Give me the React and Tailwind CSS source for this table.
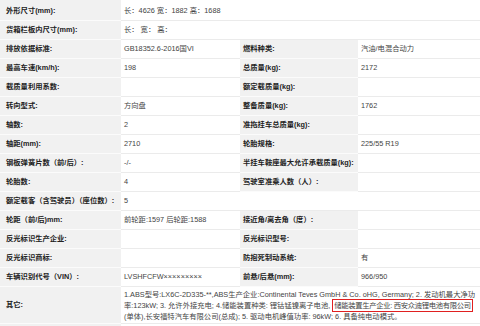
const rows = [
  ['外形尺寸(mm):', '长：4626 宽：1882 高：1688', null, null],
  ['货箱栏板内尺寸(mm):', '长： 宽： 高：', null, null],
  ['排放依据标准:', 'GB18352.6-2016国VI', '燃料种类:', '汽油/电混合动力'],
  ['最高车速(km/h):', '198', '总质量(kg):', '2172'],
  ['载质量利用系数:', '', '额定载质量(kg):', ''],
  ['转向型式:', '方向盘', '整备质量(kg):', '1762'],
  ['轴数:', '2', '准拖挂车总质量(kg):', ''],
  ['轴距(mm):', '2710', '轮胎规格:', '225/55 R19'],
  ['钢板弹簧片数（前/后）:', '-/-', '半挂车鞍座最大允许承载质量(kg):', ''],
  ['轮胎数:', '4', '驾驶室准乘人数（人）:', ''],
  ['额定载客（含驾驶员）（座位数）:', '5', null, null],
  ['轮距（前/后)mm:', '前轮距:1597 后轮距:1588', '接近角/离去角（度）:', ''],
  ['反光标识生产企业:', '', '反光标识型号:', ''],
  ['反光标识商标:', '', '防抱死制动系统:', '有'],
  ['车辆识别代号（VIN）:', 'LVSHFCFW×××××××××', '前悬/后悬(mm):', '966/950'],
]

// latin glyphs from Liberation Sans, CJK from Noto
const font = { fontFamily: '"Liberation Sans", "Noto Sans CJK SC", sans-serif' }

function Label({ text, first, left }) {
  return (
    <div
      className={`flex items-center bg-[#f1f1f1] border-b border-[#fbfbfb] font-bold text-[#222] whitespace-nowrap overflow-hidden ${left ? 'pl-[6px]' : 'pl-[3px]'} ${first ? 'pt-[2px]' : ''}`}
    >
      {text}
    </div>
  )
}

function Value({ text, first, span }) {
  return (
    <div
      className={`flex items-center bg-white border-b border-[#ebebeb] pl-[3px] text-[#444] whitespace-nowrap overflow-hidden ${span ? 'col-span-2' : ''} ${first ? 'pt-[2px]' : ''}`}
    >
      {text}
    </div>
  )
}

function SpecRow({ row, first }) {
  const [l1, v1, l2, v2] = row
  return (
    <div className={`grid grid-cols-[121px_119px_118px_122px] ${first ? 'h-[21px]' : 'h-[19px]'}`}>
      <Label text={l1} first={first} left />
      <Value text={v1} first={first} />
      {l2 === null ? (
        <Value text="" first={first} span />
      ) : (
        <>
          <Label text={l2} first={first} />
          <Value text={v2} first={first} />
        </>
      )}
    </div>
  )
}

export default function App() {
  return (
    <div className="w-[480px] h-[326px] overflow-hidden bg-white text-[7.3px] leading-none" style={font}>
      {rows.map((row, i) => (
        <SpecRow key={i} row={row} first={i === 0} />
      ))}
      <div className="grid grid-cols-[121px_359px] h-[37px]">
        <div className="flex items-center bg-[#f1f1f1] border-b border-[#fbfbfb] pl-[6px] font-bold text-[#222]">
          其它:
        </div>
        <div className="flex flex-col justify-center bg-white border-b border-[#ebebeb] pl-[3px] text-[#444] leading-[11px] whitespace-nowrap overflow-hidden">
          <div>1.ABS型号:LX6C-2D335-**,ABS生产企业:Continental Teves GmbH &amp; Co. oHG, Germany; 2. 发动机最大净功</div>
          <div>
            率:123kW; 3. 允许外接充电; 4.储能装置种类: 锂钴锰镍离子电池,{' '}
            <span className="border-[1.5px] border-[#e02020] px-[1px] py-[1px] tracking-[-0.3px]">储能装置生产企业: 西安众迪锂电池有限公司</span>
          </div>
          <div>(单体),长安福特汽车有限公司(总成); 5. 驱动电机峰值功率: 96kW; 6. 具备纯电动模式。</div>
        </div>
      </div>
      <div className="grid grid-cols-[121px_359px] h-[19px]">
        <div className="bg-[#f1f1f1]" />
        <div className="bg-white" />
      </div>
    </div>
  )
}
